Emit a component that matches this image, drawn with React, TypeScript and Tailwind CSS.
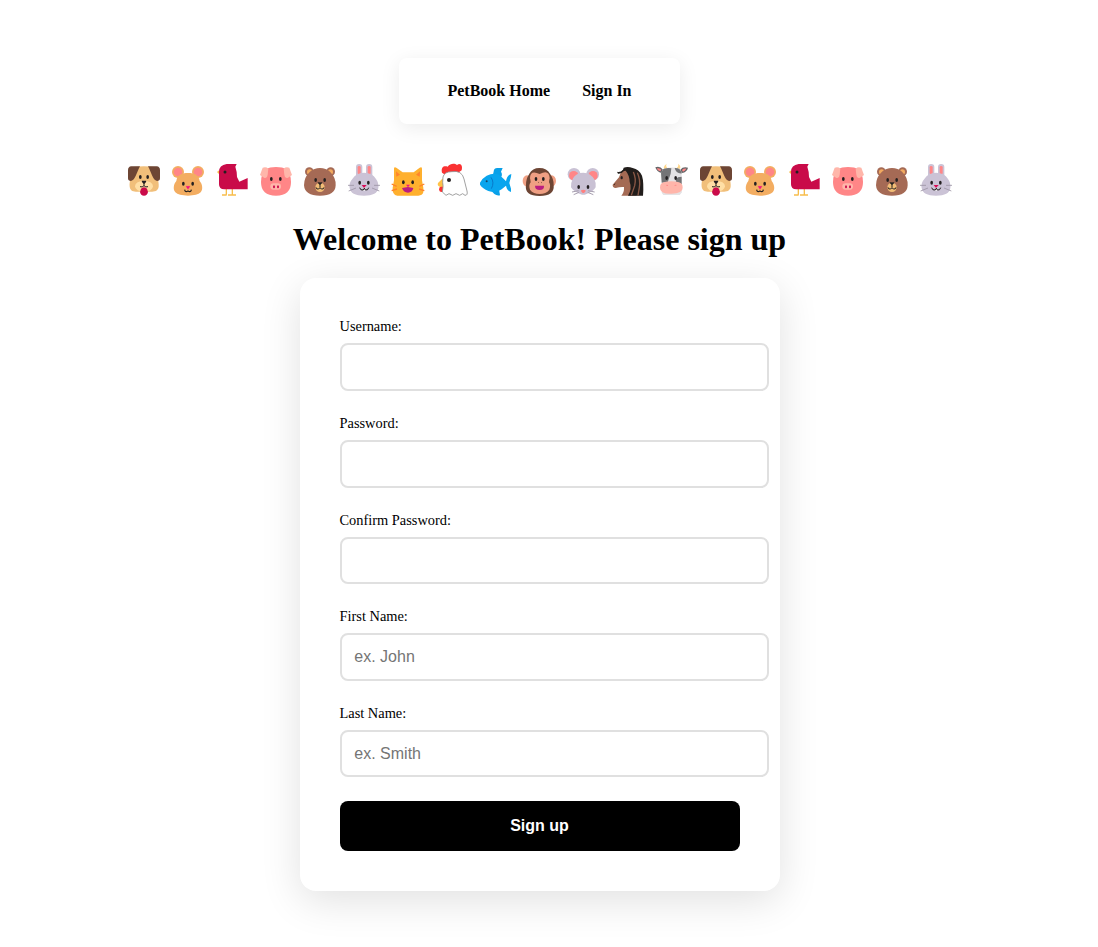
import type { ReactNode } from 'react';

const eyes = (x1: number, x2: number, y: number) => (
  <g fill="#231f20">
    <ellipse cx={x1} cy={y} rx="4" ry="6" />
    <ellipse cx={x2} cy={y} rx="4" ry="6" />
  </g>
);

const art: Record<string, ReactNode> = {
  dog: (
    <>
      <path d="M34 36Q66 32 98 36C103 58 112 80 110 95C108 108 98 110 86 110H46C34 110 25 108 23 95C21 80 29 58 34 36Z" fill="#f1bf7a" />
      <path d="M54 34Q40 33 28 34Q18 35 18 46V70Q18 78 27 78C40 76 44 52 54 34Z" fill="#6d4534" />
      <path d="M78 34Q92 33 104 34Q114 35 114 46V70Q114 78 105 78C92 76 88 52 78 34Z" fill="#6d4534" />
      <ellipse cx="66" cy="94" rx="27" ry="17" fill="#ffdfa5" />
      {eyes(55, 77, 66)}
      <path d="M66 82V92Q61 98 54 95M66 92Q71 98 78 95" fill="none" stroke="#231f20" strokeWidth="3" />
      <path d="M60 77H72Q75 80 66 87Q57 80 60 77Z" fill="#231f20" />
      <path d="M57 101Q61 98 66 97Q71 98 75 101L78 111Q76 122 66 122T54 111Z" fill="#ca0b4a" />
    </>
  ),
  hamster: (
    <>
      <circle cx="36" cy="51" r="18" fill="#f3ad61" />
      <circle cx="96" cy="51" r="18" fill="#f3ad61" />
      <circle cx="36" cy="51" r="13" fill="#ff8687" />
      <circle cx="96" cy="51" r="13" fill="#ff8687" />
      <path d="M66 54C86 54 99 61 101 78C109 87 112 103 104 112Q94 122 66 122T28 112C20 103 23 87 31 78C33 61 46 54 66 54Z" fill="#f3ad61" />
      {eyes(52, 80, 86)}
      <path d="M56 104Q57 113 66 108Q75 113 76 104" fill="none" stroke="#231f20" strokeWidth="3.5" />
      <path d="M60 94H72L66 103Z" fill="#f3127f" stroke="#f3127f" strokeWidth="1" />
    </>
  ),
  bird: (
    <>
      <path d="M28 45L21 51L29 59Z" fill="#f7bd4b" />
      <path d="M49 102V119M36 120H50M67 102V120M54 120H78" fill="none" stroke="#f7bd4b" strokeWidth="4" />
      <path d="M50 27H80L76 35Q82 53 81 66L88 80L113 69V103H43Q27 103 27 88V50Q27 31 50 27Z" fill="#c90b49" />
      <circle cx="45" cy="51" r="4.5" fill="#231f20" />
    </>
  ),
  pig: (
    <>
      <path d="M34 43Q47 36 66 36T99 43Q111 59 111 81Q111 122 66 122T21 81Q21 58 34 43Z" fill="#ff8687" />
      <path d="M26 38Q36 34 43 41L41 59Q38 72 30 68L18 60Z" fill="#ffb6aa" />
      <path d="M106 38Q96 34 89 41L91 59Q94 72 102 68L114 60Z" fill="#ffb6aa" />
      {eyes(52, 79, 72)}
      <rect x="49" y="85" width="32" height="19" rx="9.5" fill="#ffb6aa" />
      <ellipse cx="60" cy="95" rx="3" ry="4.5" fill="#ca0b4a" />
      <ellipse cx="72" cy="95" rx="3" ry="4.5" fill="#ca0b4a" />
    </>
  ),
  bear: (
    <>
      <circle cx="34" cy="50" r="13" fill="#a56a55" />
      <circle cx="98" cy="50" r="13" fill="#a56a55" />
      <circle cx="35" cy="51" r="8" fill="#f2aa60" />
      <circle cx="97" cy="51" r="8" fill="#f2aa60" />
      <path d="M36 50Q48 39 66 39T96 50Q114 67 113 91Q112 122 66 122T18 91Q18 66 36 50Z" fill="#a56a55" />
      <circle cx="66" cy="97" r="14" fill="#f2bd76" />
      {eyes(53, 80, 75)}
      <path d="M60 83H72L66 90Z" fill="#231f20" stroke="#231f20" strokeWidth="2" />
      <path d="M66 90V97M54 97Q55 104 62 102L66 98L70 102Q77 104 78 97" fill="none" stroke="#231f20" strokeWidth="3" />
    </>
  ),
  rabbit: (
    <>
      <rect x="42" y="27" width="19" height="50" rx="9" fill="#cbc3d6" />
      <rect x="72" y="27" width="19" height="50" rx="9" fill="#cbc3d6" />
      <rect x="47" y="33" width="9" height="25" rx="4" fill="#ff8687" />
      <rect x="77" y="33" width="9" height="25" rx="4" fill="#ff8687" />
      <path d="M66 53Q91 53 102 72Q111 84 109 99Q106 122 66 122T23 99Q20 84 31 72Q43 53 66 53Z" fill="#cbc3d6" />
      <path d="M18 91H36M20 108L42 99M114 91H96M112 108L90 99" stroke="#9b94a5" strokeWidth="2.5" fill="none" />
      {eyes(53, 79, 83)}
      <path d="M63 98H70V107H63Z" fill="#fff" />
      <path d="M53 98Q55 107 64 105L67 99L70 105Q78 107 80 98" fill="none" stroke="#231f20" strokeWidth="3" />
      <path d="M59 90H74L66 99Z" fill="#d80b55" />
    </>
  ),
  cat: (
    <>
      <path d="M24 41Q24 35 31 38L50 52H83L101 38Q108 35 108 41V76L112 98V112Q109 122 97 122H34Q18 120 20 98L24 76Z" fill="#ffb02e" />
      <path d="M30 49L42 59L31 65ZM102 49L90 59L101 65Z" fill="#ff822d" />
      <path d="M17 87L32 94M17 107L33 102M115 87L100 94M115 107L99 102" stroke="#ff822d" strokeWidth="4" />
      {eyes(52, 80, 82)}
      <path d="M60 89H72L66 97Z" fill="#f3127f" />
      <path d="M48 99L66 96L82 99Q79 113 66 113T48 99Z" fill="#bb1d80" />
    </>
  ),
  chicken: (
    <>
      <path d="M36 53C32 35 43 31 53 35C61 24 75 25 81 30C92 22 99 33 95 46L78 58H43Z" fill="#fa3132" />
      <path d="M35 93Q28 94 27 104Q29 113 37 111L43 93Z" fill="#fa3132" />
      <path d="M37 71L24 84Q21 92 29 95H42V71Z" fill="#ffc247" />
      <path d="M39 66Q43 50 65 50Q96 45 102 72L111 108Q114 121 105 121L98 116L89 121L78 116L68 121L57 116L48 121L37 111Q41 92 38 82Z" fill="#fff" stroke="#929292" strokeWidth="2.6" />
      <circle cx="57" cy="75" r="6" fill="#231f20" />
    </>
  ),
  fish: (
    <>
      <path d="M57 59L60 44Q62 39 69 39H86L81 50Q88 61 78 69Z" fill="#09a0e8" />
      <path d="M50 103Q62 125 78 121L75 103Z" fill="#09a0e8" />
      <path d="M18 83Q24 70 38 62Q66 49 83 66Q90 72 96 79Q99 60 112 57L111 65L106 84L111 101L111 111Q99 108 96 92L83 103Q67 116 43 108Q26 101 18 89Z" fill="#09a5ee" />
      <path d="M51 67Q62 83 52 101" fill="none" stroke="#0878c9" strokeWidth="3" />
      <circle cx="38" cy="79" r="3" fill="#174060" />
    </>
  ),
  monkey: (
    <>
      <ellipse cx="27" cy="78" rx="13" ry="17" fill="#f0a084" />
      <ellipse cx="101" cy="78" rx="13" ry="17" fill="#f0a084" />
      <path d="M64 39Q87 39 96 56Q108 73 107 90Q110 123 65 123Q19 123 24 90Q23 73 34 56Q43 39 64 39Z" fill="#6d4534" />
      <path d="M65 57Q94 42 95 70Q93 76 93 82Q99 91 94 104Q84 117 65 117T36 104Q31 91 38 82Q38 77 36 70Q36 43 65 57Z" fill="#ef9f83" />
      {eyes(54, 76, 72)}
      <path d="M61 82L63 83M70 83L72 82" stroke="#6d4534" strokeWidth="3" />
      <path d="M51 92H78Q79 105 65 105T51 92Z" fill="#bb1d80" />
    </>
  ),
  mouse: (
    <>
      <circle cx="36" cy="58" r="19" fill="#c9c1d4" />
      <circle cx="92" cy="58" r="19" fill="#c9c1d4" />
      <circle cx="35" cy="62" r="14" fill="#ff8687" />
      <circle cx="93" cy="62" r="14" fill="#ff8687" />
      <path d="M64 53Q86 54 97 73Q103 84 101 97Q94 110 72 118Q64 121 56 118Q34 109 27 97Q26 84 33 70Q42 53 64 53Z" fill="#c9c1d4" />
      {eyes(50, 78, 96)}
      <path d="M30 111L50 107M35 119L51 112M98 111L78 107M94 119L77 112" stroke="#a8a0b0" strokeWidth="3" />
      <path d="M57 106Q64 103 71 106Q72 109 66 114H62Q56 109 57 106Z" fill="#ff807f" />
    </>
  ),
  horse: (
    <>
      <path d="M50 46Q60 36 74 45L92 122H46Q55 112 54 96Q42 95 29 99Q19 98 20 89L39 67Q42 54 50 46Z" fill="#a46a54" />
      <path d="M53 38Q66 34 80 39Q99 43 108 62Q114 82 111 122H66Q79 101 71 80Q70 60 59 47L54 48Q47 57 36 56L33 50Q43 53 51 44Z" fill="#211d1b" />
      <path d="M82 51Q91 70 86 92L76 121M94 53Q104 74 100 98L96 121" fill="none" stroke="#8a5846" strokeWidth="4" />
      <ellipse cx="47" cy="68" rx="3.5" ry="5" fill="#231f20" />
      <path d="M24 90L27 86" stroke="#432b25" strokeWidth="3" />
    </>
  ),
  cow: (
    <>
      <path d="M50 26Q45 35 56 42L46 45Q35 37 50 26ZM84 26Q88 34 76 42L87 44Q97 35 84 26Z" fill="#ffd78b" />
      <path d="M16 37Q30 32 39 44L35 54Q20 51 16 37ZM114 38Q99 34 91 44L96 54Q111 51 114 38Z" fill="#646567" />
      <path d="M20 40Q29 38 34 44L31 49Q23 47 20 40ZM109 41Q101 40 96 45L99 50Q106 47 109 41Z" fill="#ff8687" />
      <path d="M40 42Q66 34 89 41L95 54V83Q91 96 96 112L89 120H40L35 113L38 85L33 54Z" fill="#e4e2e4" />
      <path d="M40 42Q53 38 64 40L62 56L53 82L35 83L33 53ZM74 39Q91 38 96 55Q78 57 74 39ZM79 82Q74 74 84 67L95 65V88Z" fill="#747476" />
      {eyes(50, 77, 69)}
      <path d="M41 82Q52 79 64 79T87 82Q98 85 98 98Q99 115 64 116T30 98Q30 85 41 82Z" fill="#ffb5aa" />
      <path d="M49 91Q52 89 54 93M74 93Q76 89 79 91" stroke="#ff8687" strokeWidth="3" fill="none" />
    </>
  ),
};

const parade = [
  'dog', 'hamster', 'bird', 'pig', 'bear', 'rabbit', 'cat', 'chicken', 'fish', 'monkey',
  'mouse', 'horse', 'cow', 'dog', 'hamster', 'bird', 'pig', 'bear', 'rabbit',
];

const fields = [
  { id: 'username', label: 'Username:', type: 'text' },
  { id: 'password', label: 'Password:', type: 'password' },
  { id: 'confirm', label: 'Confirm Password:', type: 'password' },
  { id: 'first', label: 'First Name:', type: 'text', placeholder: 'ex. John' },
  { id: 'last', label: 'Last Name:', type: 'text', placeholder: 'ex. Smith' },
];

export default function App() {
  return (
    <div className="flex h-[947px] flex-col items-center overflow-hidden bg-white pr-[19px] pt-[58px] font-['Liberation_Serif',serif] text-black">
      <nav className="flex h-[66px] w-[281px] shrink-0 items-center justify-center gap-8 rounded-lg bg-white text-base font-bold shadow-[0_4px_20px_rgba(0,0,0,0.08)]">
        <a href="#home" className="whitespace-nowrap">PetBook Home</a>
        <a href="#signin" className="whitespace-nowrap">Sign In</a>
      </nav>
      <div className="mt-[31px] flex h-12 shrink-0">
        {parade.map((name, i) => (
          <svg key={i} viewBox="0 0 132 144" className="h-12 w-11 shrink-0" aria-hidden="true">
            {art[name]}
          </svg>
        ))}
      </div>
      <h1 className="mt-[18px] h-[37px] shrink-0 whitespace-nowrap text-[32px] font-bold leading-[37px]">
        Welcome to PetBook! Please sign up
      </h1>
      <form
        className="mt-5 flex h-[613px] w-[480px] shrink-0 flex-col rounded-2xl bg-white px-10 pb-[39.6px] pt-[40.4px] shadow-[0_10px_40px_rgba(0,0,0,0.12)]"
        onSubmit={(e) => e.preventDefault()}
      >
        {fields.map((f) => (
          <div key={f.id} className="mb-6 flex flex-col">
            <label htmlFor={f.id} className="mb-2 h-[17px] text-[14.4px] leading-[17px]">{f.label}</label>
            <input
              id={f.id}
              type={f.type}
              placeholder={f.placeholder}
              className="h-[47.6px] w-[429.6px] rounded-lg border-2 border-[#e0e0e0] bg-white px-[12.8px] font-['Liberation_Sans',sans-serif] text-base placeholder:text-[#757575]"
            />
          </div>
        ))}
        <button className="h-[50px] w-full shrink-0 rounded-lg bg-black font-['Liberation_Sans',sans-serif] text-base font-bold text-white">
          Sign up
        </button>
      </form>
    </div>
  );
}
